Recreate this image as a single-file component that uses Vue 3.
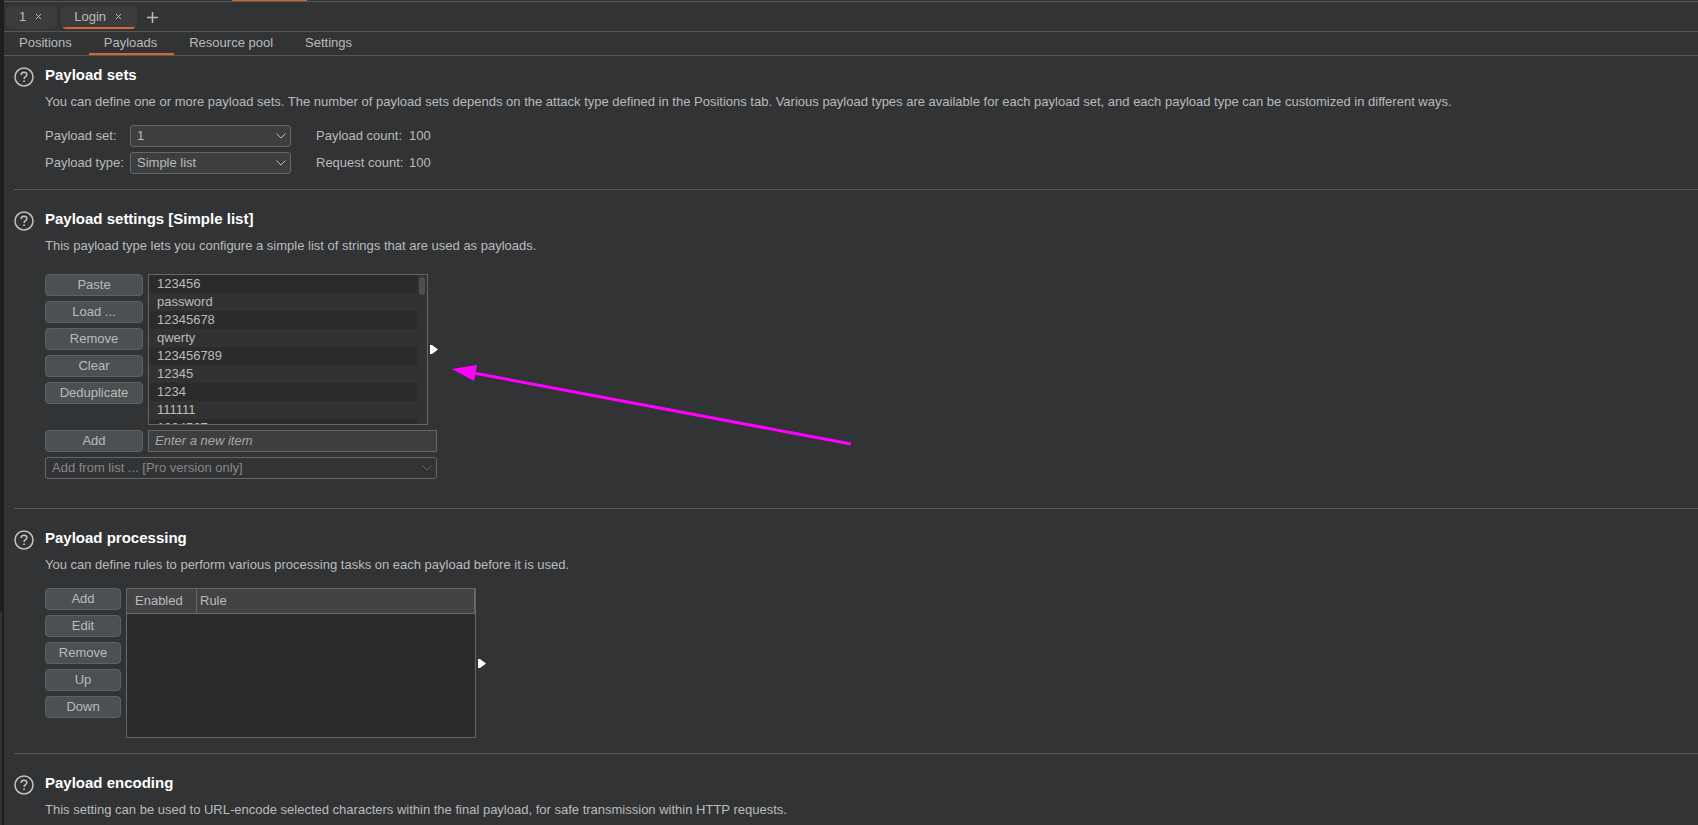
<script setup>
import { ref } from 'vue'

const payloadSet = ref('1')
const payloadType = ref('Simple list')
const newItem = ref('')
const attackTabs = [
  { name: '1', active: false },
  { name: 'Login', active: true },
]
const views = ['Positions', 'Payloads', 'Resource pool', 'Settings']
const listActions = ['Paste', 'Load ...', 'Remove', 'Clear', 'Deduplicate']
const ruleActions = ['Add', 'Edit', 'Remove', 'Up', 'Down']
const items = ['123456', 'password', '12345678', 'qwerty', '123456789', '12345', '1234', '111111', '1234567']
</script>

<template>
  <div class="app">
    <div class="rail"><div class="rail-thumb"></div></div>
    <main class="panel">
      <div class="top-edge"><span class="top-mark"></span></div>

      <div class="attack-tabs">
        <div v-for="tab in attackTabs" :key="tab.name" class="attack-tab" :class="{ active: tab.active }">
          <button type="button" class="bare">{{ tab.name }}</button>
          <button type="button" class="bare close" :aria-label="'Close ' + tab.name">
            <svg width="7" height="7" viewBox="0 0 7 7"><path d="M1 1l5 5M6 1l-5 5" /></svg>
          </button>
        </div>
        <button type="button" class="bare plus" aria-label="New tab">
          <svg width="11" height="11" viewBox="0 0 11 11"><path d="M5.5 0v11M0 5.5h11" /></svg>
        </button>
      </div>

      <nav class="views">
        <button v-for="v in views" :key="v" type="button" class="bare view" :class="{ active: v === 'Payloads' }">{{ v }}</button>
      </nav>

      <section class="section first">
        <button type="button" class="bare help" aria-label="Help">
          <svg width="20" height="20" viewBox="0 0 20 20"><circle cx="10" cy="10" r="9" /><path d="M7.2 7.9c0-1.7 1.2-2.7 2.8-2.7s2.8 1 2.8 2.5c0 2-2.7 2-2.7 4.2" /><path class="dot" d="M9.2 13.4h1.7v1.7h-1.7z" /></svg>
        </button>
        <div class="body">
          <h2>Payload sets</h2>
          <p>You can define one or more payload sets. The number of payload sets depends on the attack type defined in the Positions tab. Various payload types are available for each payload set, and each payload type can be customized in different ways.</p>
          <div class="set-form">
            <label for="payload-set">Payload set:</label>
            <div class="combo">
              <select id="payload-set" v-model="payloadSet"><option>1</option></select>
              <svg width="10" height="6" viewBox="0 0 10 6"><path d="M0.5 0.5L5 5l4.5-4.5" /></svg>
            </div>
            <span class="count">Payload count:</span><span>100</span>
            <label for="payload-type">Payload type:</label>
            <div class="combo">
              <select id="payload-type" v-model="payloadType"><option>Simple list</option></select>
              <svg width="10" height="6" viewBox="0 0 10 6"><path d="M0.5 0.5L5 5l4.5-4.5" /></svg>
            </div>
            <span class="count">Request count:</span><span>100</span>
          </div>
        </div>
      </section>

      <section class="section">
        <button type="button" class="bare help" aria-label="Help">
          <svg width="20" height="20" viewBox="0 0 20 20"><circle cx="10" cy="10" r="9" /><path d="M7.2 7.9c0-1.7 1.2-2.7 2.8-2.7s2.8 1 2.8 2.5c0 2-2.7 2-2.7 4.2" /><path class="dot" d="M9.2 13.4h1.7v1.7h-1.7z" /></svg>
        </button>
        <div class="body">
          <h2>Payload settings [Simple list]</h2>
          <p>This payload type lets you configure a simple list of strings that are used as payloads.</p>
          <div class="list-form">
            <div class="row">
              <div class="actions wide">
                <button v-for="a in listActions" :key="a" type="button" class="btn">{{ a }}</button>
              </div>
              <div class="list">
                <ul><li v-for="i in items" :key="i">{{ i }}</li></ul>
                <div class="track"><div class="thumb"></div></div>
              </div>
              <button type="button" class="bare expand" aria-label="Resize list">
                <svg width="8" height="9" viewBox="0 0 8 9"><path d="M0 0h2l6 4.5L2 9H0z" /></svg>
              </button>
              <svg class="pointer" width="400" height="82" viewBox="0 0 400 82">
                <path class="shaft" d="M22 8L399 79" /><path class="head" d="M0 4L25 0l-3 16z" />
              </svg>
            </div>
            <div class="row">
              <button type="button" class="btn add">Add</button>
              <input v-model="newItem" type="text" placeholder="Enter a new item" aria-label="New item" />
            </div>
            <div class="combo off">
              <select disabled aria-label="Add from list"><option>Add from list ... [Pro version only]</option></select>
              <svg width="10" height="6" viewBox="0 0 10 6"><path d="M0.5 0.5L5 5l4.5-4.5" /></svg>
            </div>
          </div>
        </div>
      </section>

      <section class="section">
        <button type="button" class="bare help" aria-label="Help">
          <svg width="20" height="20" viewBox="0 0 20 20"><circle cx="10" cy="10" r="9" /><path d="M7.2 7.9c0-1.7 1.2-2.7 2.8-2.7s2.8 1 2.8 2.5c0 2-2.7 2-2.7 4.2" /><path class="dot" d="M9.2 13.4h1.7v1.7h-1.7z" /></svg>
        </button>
        <div class="body">
          <h2>Payload processing</h2>
          <p>You can define rules to perform various processing tasks on each payload before it is used.</p>
          <div class="row rules">
            <div class="actions">
              <button v-for="a in ruleActions" :key="a" type="button" class="btn">{{ a }}</button>
            </div>
            <div class="table-box">
              <table>
                <thead><tr><th class="enabled">Enabled</th><th>Rule</th></tr></thead>
                <tbody></tbody>
              </table>
            </div>
            <button type="button" class="bare expand" aria-label="Resize table">
              <svg width="8" height="9" viewBox="0 0 8 9"><path d="M0 0h2l6 4.5L2 9H0z" /></svg>
            </button>
          </div>
        </div>
      </section>

      <section class="section">
        <button type="button" class="bare help" aria-label="Help">
          <svg width="20" height="20" viewBox="0 0 20 20"><circle cx="10" cy="10" r="9" /><path d="M7.2 7.9c0-1.7 1.2-2.7 2.8-2.7s2.8 1 2.8 2.5c0 2-2.7 2-2.7 4.2" /><path class="dot" d="M9.2 13.4h1.7v1.7h-1.7z" /></svg>
        </button>
        <div class="body">
          <h2>Payload encoding</h2>
          <p>This setting can be used to URL-encode selected characters within the final payload, for safe transmission within HTTP requests.</p>
        </div>
      </section>
    </main>
  </div>
</template>

<style>
body {
  background: #323335;
}
</style>

<style scoped>
.app {
  display: flex;
  min-height: 100vh;
  background: #323335;
  color: #bbbbbb;
  font-family: "Liberation Sans", Arial, sans-serif;
  font-size: 13px;
  line-height: 18px;
}
.app *,
.app {
  box-sizing: border-box;
}
button,
select,
input {
  font: inherit;
  color: inherit;
  margin: 0;
}
svg {
  display: block;
  fill: none;
  stroke: currentColor;
}
.rail {
  flex: none;
  width: 4px;
  background: #1e1e1e;
  display: flex;
  flex-direction: column;
  justify-content: flex-end;
}
.rail-thumb {
  width: 2px;
  height: 26vh;
  background: #323335;
  border-radius: 0 2px 0 0;
}
.panel {
  flex: 1;
  min-width: 0;
}
.bare {
  background: none;
  border: 0;
  padding: 0;
}
.top-edge {
  height: 2px;
  border-bottom: 1px solid #555759;
}
.top-mark {
  display: block;
  width: 75px;
  height: 1px;
  margin-left: 228px;
  background: #d9642f;
}
.attack-tabs {
  display: flex;
  align-items: center;
  gap: 4px;
  height: 30px;
  padding: 4px 2px 2px;
  border-bottom: 1px solid #555759;
}
.attack-tab {
  display: flex;
  align-items: center;
  gap: 9px;
  height: 23px;
  padding: 0 15px 2px 13px;
  border-radius: 5px;
  background: #3c3c3c;
}
.attack-tab.active {
  background: linear-gradient(#d9642f, #d9642f) center bottom / 72px 2px no-repeat #3c3c3c;
}
.plus {
  margin-left: 6px;
}
.plus svg {
  stroke-width: 1.5;
}
.views {
  display: flex;
  height: 24px;
  border-bottom: 1px solid #555759;
}
.view {
  padding: 0 17px 0 15px;
  border-bottom: 2px solid transparent;
}
.view.active {
  border-color: #d9642f;
}
.section {
  display: flex;
  gap: 11px;
  margin-left: 10px;
  padding-top: 20px;
  border-top: 1px solid #555759;
}
.section.first {
  border-top: 0;
  padding-top: 10px;
}
.help {
  align-self: flex-start;
  margin-top: 1px;
  color: #c4c4c4;
}
.help svg {
  stroke-width: 1.5;
}
.help .dot {
  fill: currentColor;
  stroke: none;
}
.body {
  flex: 1;
  min-width: 0;
}
h2 {
  margin: 0 0 9px;
  font-size: 15px;
  line-height: 18px;
  font-weight: bold;
  color: #ffffff;
}
p {
  margin: 0;
}
.set-form {
  display: grid;
  grid-template-columns: 80px 161px 108px auto;
  justify-content: start;
  column-gap: 5px;
  row-gap: 5px;
  align-items: center;
  padding: 14px 0 15px;
}
.count {
  padding-left: 20px;
  white-space: nowrap;
}
.combo {
  display: grid;
  align-items: center;
}
.combo > * {
  grid-area: 1 / 1;
}
.combo svg {
  justify-self: end;
  margin-right: 5px;
  pointer-events: none;
}
select {
  appearance: none;
  width: 100%;
  height: 22px;
  padding: 0 20px 0 6px;
  border: 1px solid #646668;
  border-radius: 3px;
  background: #3c3e40;
}
.combo.off select {
  background: transparent;
  color: #868889;
  opacity: 1;
}
.combo.off svg {
  color: #626466;
}
.list-form {
  display: flex;
  flex-direction: column;
  gap: 5px;
  width: 392px;
  padding: 19px 0 29px;
}
.row {
  position: relative;
  display: flex;
  gap: 5px;
}
.actions {
  flex: none;
  display: flex;
  flex-direction: column;
  gap: 5px;
  width: 76px;
}
.actions.wide,
.btn.add {
  width: 98px;
}
.btn {
  height: 22px;
  padding: 0;
  border: 1px solid #5e6163;
  border-radius: 4px;
  background: #4c5052;
}
.list {
  flex: none;
  display: flex;
  width: 280px;
  height: 151px;
  overflow: hidden;
  border: 1px solid #646668;
  background: #323232;
}
ul {
  flex: 1;
  margin: 0;
  padding: 0;
  list-style: none;
}
li {
  height: 18px;
  padding-left: 8px;
  line-height: 17px;
}
li:nth-child(odd) {
  background: #2b2b2b;
}
.track {
  width: 10px;
  padding: 2px;
}
.thumb {
  height: 18px;
  border-radius: 3px;
  background: #4d4e50;
}
.expand {
  flex: none;
  align-self: center;
  margin-left: -3px;
}
.expand svg {
  fill: #ffffff;
  stroke: none;
}
.pointer {
  position: absolute;
  left: 407px;
  top: 91px;
  pointer-events: none;
}
.shaft {
  stroke: #ff00ff;
  stroke-width: 3;
}
.head {
  fill: #ff00ff;
  stroke: none;
}
input {
  flex: 1;
  min-width: 0;
  height: 22px;
  padding: 0 6px 1px;
  border: 1px solid #646668;
  border-radius: 0;
  background: #3c3e40;
}
input::placeholder {
  color: #a8a8a8;
  font-style: italic;
  opacity: 1;
}
.rules {
  padding: 14px 0 15px;
}
.table-box {
  width: 350px;
  height: 150px;
  border: 1px solid #646668;
  background: #2b2b2b;
}
table {
  width: 100%;
  border-collapse: separate;
  border-spacing: 0;
  table-layout: fixed;
}
th {
  height: 25px;
  padding: 0 3px;
  border: 0;
  border-bottom: 1px solid #646668;
  border-right: 1px solid #646668;
  background: #434345;
  font-weight: normal;
  text-align: left;
}
.enabled {
  width: 70px;
  padding-left: 8px;
}
</style>
